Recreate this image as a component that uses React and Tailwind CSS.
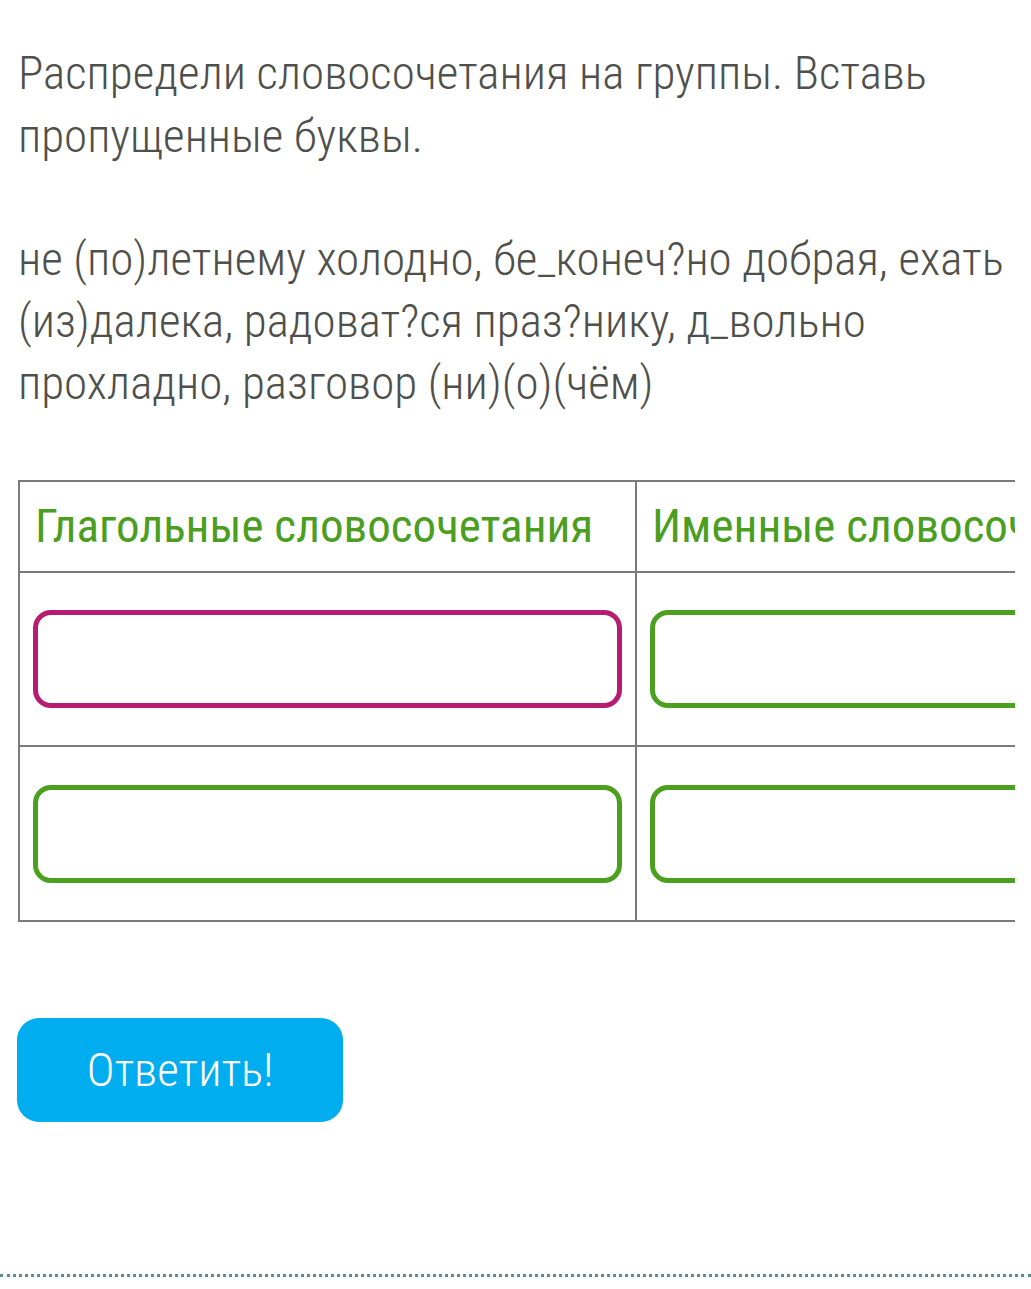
export default function App() {
  const font = { fontFamily: "Roboto, 'Noto Sans', sans-serif" };
  return (
    <div className="min-h-[1289px] bg-white flex flex-col" style={font}>
      <div className="pl-[18px] pr-[16px] pt-[41px]">
        <p className="text-[47px] leading-[63px] font-light font-stretch-condensed text-[#4f504b] whitespace-nowrap">
          Распредели словосочетания на группы. Вставь
          <br />
          пропущенные буквы.
        </p>
        <p className="mt-[61px] text-[47px] leading-[62px] font-light font-stretch-condensed text-[#4f504b] whitespace-nowrap">
          не (по)летнему холодно, бе_конеч?но добрая, ехать
          <br />
          (из)далека, радоват?ся праз?нику, д_вольно
          <br />
          прохладно, разговор (ни)(о)(чём)
        </p>
        <div className="mt-[66px] overflow-hidden w-[997px]">
          <div className="flex flex-col w-[1240px] border-[2px] border-[#7a7a7a]">
            <div className="flex h-[91px] border-b-[2px] border-[#7a7a7a]">
              <div className="w-[617px] shrink-0 border-r-[2px] border-[#7a7a7a] flex items-center pl-[15px]">
                <span className="text-[47px] font-stretch-condensed text-[#4b9e1f] whitespace-nowrap">Глагольные словосочетания</span>
              </div>
              <div className="flex-1 flex items-center pl-[15px]">
                <span className="text-[47px] font-stretch-condensed text-[#4b9e1f] whitespace-nowrap">Именные словосочетания</span>
              </div>
            </div>
            <div className="flex h-[174px] border-b-[2px] border-[#7a7a7a]">
              <div className="w-[617px] shrink-0 border-r-[2px] border-[#7a7a7a] flex items-center px-[13px]">
                <div className="w-full h-[98px] rounded-[18px] border-[5px] border-[#b81c72]" />
              </div>
              <div className="flex-1 flex items-center px-[13px]">
                <div className="w-[590px] h-[98px] rounded-[18px] border-[5px] border-[#4ca01f]" />
              </div>
            </div>
            <div className="flex h-[173px]">
              <div className="w-[617px] shrink-0 border-r-[2px] border-[#7a7a7a] flex items-center px-[13px]">
                <div className="w-full h-[98px] rounded-[18px] border-[5px] border-[#4ca01f]" />
              </div>
              <div className="flex-1 flex items-center px-[13px]">
                <div className="w-[590px] h-[98px] rounded-[18px] border-[5px] border-[#4ca01f]" />
              </div>
            </div>
          </div>
        </div>
        <button className="mt-[96px] -ml-[1px] w-[326px] h-[104px] rounded-[22px] bg-[#00aeef] text-white text-[47px] font-light font-stretch-condensed flex items-center justify-center">
          Ответить!
        </button>
      </div>
      <div className="mt-[152px] border-t-[3px] border-dotted border-[#5b8e94]" />
    </div>
  );
}
